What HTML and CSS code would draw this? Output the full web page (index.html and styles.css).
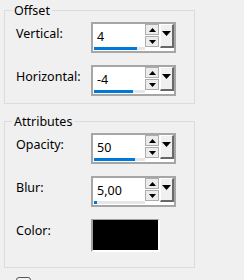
FILE: index.html
```html
<!DOCTYPE html>
<html>
<head>
<meta charset="utf-8">
<link rel="stylesheet" href="styles.css">
</head>
<body>
<div class="group">
  <div class="legend">Offset</div>
  <div class="rows">
    <span class="lbl">Vertical:</span>
    <div class="spin">
      <div class="field"><span class="val">4</span><div class="track"><div class="fill" style="width:43px"></div></div></div>
      <div class="arrows">
        <div class="btn"><svg width="7" height="4" viewBox="0 0 7 4"><polygon points="0,4 3.5,0 7,4" fill="#000"/></svg></div>
        <div class="btn"><svg width="7" height="4" viewBox="0 0 7 4"><polygon points="0,0 7,0 3.5,4" fill="#000"/></svg></div>
      </div>
      <div class="drop"><svg width="9" height="5" viewBox="0 0 9 5"><polygon points="0,0 9,0 4.5,5" fill="#000"/></svg></div>
    </div>
    <span class="lbl">Horizontal:</span>
    <div class="spin">
      <div class="field"><span class="val">-4</span><div class="track"><div class="fill" style="width:39px"></div></div></div>
      <div class="arrows">
        <div class="btn"><svg width="7" height="4" viewBox="0 0 7 4"><polygon points="0,4 3.5,0 7,4" fill="#000"/></svg></div>
        <div class="btn"><svg width="7" height="4" viewBox="0 0 7 4"><polygon points="0,0 7,0 3.5,4" fill="#000"/></svg></div>
      </div>
      <div class="drop"><svg width="9" height="5" viewBox="0 0 9 5"><polygon points="0,0 9,0 4.5,5" fill="#000"/></svg></div>
    </div>
  </div>
</div>
<div class="group g2">
  <div class="legend">Attributes</div>
  <div class="rows">
    <span class="lbl">Opacity:</span>
    <div class="spin">
      <div class="field"><span class="val">50</span><div class="track"><div class="fill" style="width:41px"></div></div></div>
      <div class="arrows">
        <div class="btn"><svg width="7" height="4" viewBox="0 0 7 4"><polygon points="0,4 3.5,0 7,4" fill="#000"/></svg></div>
        <div class="btn"><svg width="7" height="4" viewBox="0 0 7 4"><polygon points="0,0 7,0 3.5,4" fill="#000"/></svg></div>
      </div>
      <div class="drop"><svg width="9" height="5" viewBox="0 0 9 5"><polygon points="0,0 9,0 4.5,5" fill="#000"/></svg></div>
    </div>
    <span class="lbl">Blur:</span>
    <div class="spin">
      <div class="field"><span class="val">5,00</span><div class="track"><div class="fill" style="width:3px"></div></div></div>
      <div class="arrows">
        <div class="btn"><svg width="7" height="4" viewBox="0 0 7 4"><polygon points="0,4 3.5,0 7,4" fill="#000"/></svg></div>
        <div class="btn"><svg width="7" height="4" viewBox="0 0 7 4"><polygon points="0,0 7,0 3.5,4" fill="#000"/></svg></div>
      </div>
      <div class="drop"><svg width="9" height="5" viewBox="0 0 9 5"><polygon points="0,0 9,0 4.5,5" fill="#000"/></svg></div>
    </div>
    <span class="lbl">Color:</span>
    <div class="swatch"></div>
  </div>
</div>
<div class="check"></div>
</body>
</html>
```
FILE: styles.css
```css
html, body {
  margin: 0;
  background: #f0f0f0;
}
body {
  width: 244px;
  height: 280px;
  overflow: hidden;
  font-family: "Noto Sans", sans-serif;
  font-size: 12.5px;
  color: #000;
}
.group {
  margin: 10px 0 0 4px;
  width: 191px;
  box-sizing: border-box;
  border: 1px solid #dcdcdc;
  padding: 0 0 7px 11px;
}
.g2 {
  margin-top: 17px;
  padding-bottom: 15px;
}
.legend {
  width: fit-content;
  margin: -9px 0 3px -4px;
  padding: 0 2px;
  line-height: 17px;
  background: #f0f0f0;
}
.rows {
  display: grid;
  grid-template-columns: 75px 85px;
  row-gap: 12px;
  align-items: start;
}
.lbl {
  line-height: 17px;
  padding-top: 3px;
}
.spin {
  display: flex;
  height: 31px;
  box-sizing: border-box;
  border: 2px solid #a6a6a6;
  background: #fff;
}
.field {
  flex: 1;
  display: flex;
  flex-direction: column;
  justify-content: space-between;
}
.val {
  line-height: 17px;
  padding: 4px 0 0 4px;
}
.track {
  height: 3px;
  margin: 0 0 1px 1px;
  background: #e6e6e6;
}
.fill {
  height: 100%;
  background: #0078d7;
}
.arrows {
  width: 14px;
  display: flex;
  flex-direction: column;
  gap: 1px;
}
.btn {
  height: 11px;
  box-sizing: border-box;
  border: 1px solid #adadad;
  background: #ececec;
  display: flex;
  align-items: center;
  justify-content: center;
}
.drop {
  width: 14px;
  height: 24px;
  margin-left: 1px;
  box-sizing: border-box;
  border-style: solid;
  border-width: 1px 2px 2px 1px;
  border-color: #fff #696969 #696969 #fff;
  background: #f0f0f0;
  display: flex;
  justify-content: center;
  padding-top: 6px;
}
.swatch {
  width: 69px;
  height: 33px;
  box-sizing: border-box;
  border-style: solid;
  border-width: 1px 2px 2px 2px;
  border-color: #a0a0a0 #fff #fff #a0a0a0;
  background: #000;
}
.check {
  margin: 9px 0 0 16px;
  width: 15px;
  height: 15px;
  box-sizing: border-box;
  border: 1px solid #555;
  border-radius: 3px;
  background: #f4f4f4;
}
```
